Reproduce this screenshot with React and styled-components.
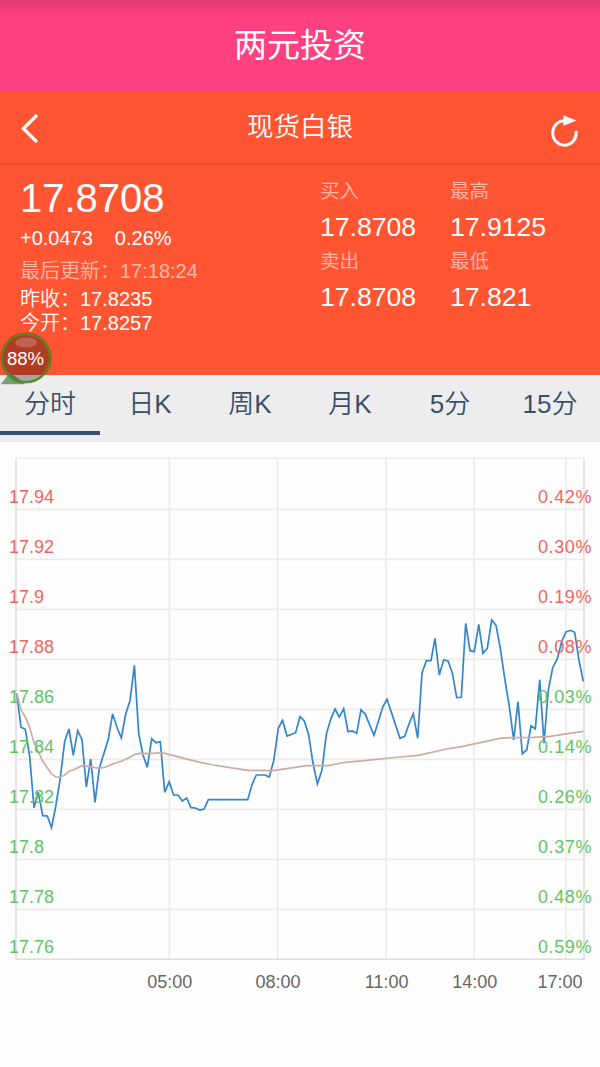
import React, { useState } from 'react';
import styled, { createGlobalStyle } from 'styled-components';

const GlobalStyle = createGlobalStyle`
    * {
        box-sizing: border-box;
    }

    body {
        margin: 0;
        background: #fefefe;
        font-family: 'Liberation Sans', 'Noto Sans CJK SC', sans-serif;
        font-weight: 350;
    }
`

const Page = styled.div`
    width: 600px;
    height: 1067px;
    overflow: hidden;
    background: #fefefe;
`

const AppBar = styled.header`
    display: flex;
    justify-content: center;
    height: 92px;
    padding-top: 1px;
    background: linear-gradient(180deg, #e13a72 0, #ff4081 17px);
    color: #fff;
    font-size: 33px;
    line-height: 90px;
    font-weight: 400;
`

const NavBar = styled.nav`
    display: flex;
    align-items: center;
    justify-content: space-between;
    height: 73px;
    padding: 0 20px;
    background: #ff5533;
    border-bottom: 2px solid #e84e2f;
`

const NavTitle = styled.h1`
    margin: 0;
    color: #fff;
    font-size: 26.5px;
    font-weight: 350;
    line-height: 70px;
    height: 71px;
`

const IconButton = styled.button`
    display: flex;
    width: 30px;
    padding: ${({ $drop }) => $drop || 0}px 0 0;
    border: none;
    background: none;
`

const Quote = styled.section`
    display: flex;
    position: relative;
    height: 210px;
    padding-left: 20px;
    background: #ff5533;
    color: #fff;
`

const Summary = styled.div`
    width: 300px;
    padding-top: 11px;
    font-size: 20px;
`

const Price = styled.div`
    font-size: 40px;
    line-height: 44px;
`

const Change = styled.div`
    display: flex;
    gap: 22px;
    padding-top: 6px;
    line-height: 24px;
`

const Updated = styled.div`
    padding-top: 9px;
    line-height: 24px;
    opacity: 0.58;
`

const Session = styled.div`
    padding-top: 5px;
    line-height: 23.5px;
`

const Stats = styled.div`
    display: grid;
    grid-template-columns: 130px 130px;
    grid-auto-rows: 70px;
    padding-top: 14px;
`

const StatLabel = styled.div`
    font-size: 19.5px;
    line-height: 24px;
    opacity: 0.58;
`

const StatValue = styled.div`
    padding-top: 8px;
    font-size: 26.6px;
    line-height: 32px;
`

const Bubble = styled.div`
    position: absolute;
    left: 0;
    top: 165px;
    width: 54px;
    height: 56px;
    z-index: 1;

    svg {
        display: block;
    }
`

const Tabs = styled.div`
    display: grid;
    grid-template-columns: repeat(6, 1fr);
    height: 67px;
    background: #ededed;
`

const Tab = styled.button`
    height: 60px;
    padding: 1px 0 0;
    border: none;
    border-bottom: 4px solid ${({ $active }) => ($active ? '#37506d' : 'transparent')};
    background: none;
    color: #37506d;
    font-family: inherit;
    font-size: 26px;
    font-weight: 350;
    line-height: 56px;
`

const ChartSvg = styled.svg`
    display: block;
    font-size: 18px;
    font-weight: 400;
`

const stats = [
    ['买入', '17.8708'],
    ['最高', '17.9125'],
    ['卖出', '17.8708'],
    ['最低', '17.821'],
]

const tabs = ['分时', '日K', '周K', '月K', '5分', '15分']

const levels = [
    ['17.94', '0.42%'],
    ['17.92', '0.30%'],
    ['17.9', '0.19%'],
    ['17.88', '0.08%'],
    ['17.86', '0.03%'],
    ['17.84', '0.14%'],
    ['17.82', '0.26%'],
    ['17.8', '0.37%'],
    ['17.78', '0.48%'],
    ['17.76', '0.59%'],
]

// [label, grid line x, label x]
const times = [
    ['05:00', 169.3, 169.7],
    ['08:00', 277.6, 278],
    ['11:00', 386, 386.7],
    ['14:00', 474.1, 474.7],
    ['17:00', 566, 560],
]

const priceLine = `16.7,251.3 21,285.3 25.3,287.3 29.7,314.7 34,365.7 38.3,350.3 42.7,373.7 47.3,374
51.5,385.7 55.7,364.7 60,338 64.7,299.3 69,287 73.3,313.3 77.7,288.7 82,297.7 86.3,345 90.7,317
95,360.3 99.3,326.3 103.7,312 108.2,297.7 112.6,272 117,285.3 121.3,296 125.7,272 130,258.7
134.4,223.3 138.7,291.3 143,313 147.3,325.3 151.7,296.7 156,300.7 160.3,299.7 164.7,350.3
169.2,339.7 173.6,353 178,353 182.3,359 186.7,356 191,365.7 195.3,366 200,368 204,367
208.3,357.7 247.7,357.7 252,342.7 256.3,333 265,333 269.3,335 273.7,318.7 278.3,286.3
282.6,278.3 287,294 295.6,290.7 300,274.7 304.3,279 308.7,293 313,321.3 317.4,342 322,328
326.3,292.3 330.7,277.3 335,267 339.3,275 343.7,266.7 348,289.7 352.3,289 356.7,291.3
361,267.7 365.3,272.3 374,293.3 378.3,279.7 382.7,265 387,257.3 400,296.3 404.7,294.3 409,282
413.3,271.7 417.7,296.3 422,231.3 426.3,218.7 431,218.7 435,196.3 439.3,233 443.7,218 448,219
452.3,230.7 456.7,255.7 461.3,255.3 465.7,181.3 470,208.7 474.3,209.7 478.7,182.3 483,211.3
487.3,206.3 491.7,178 496,183.3 500.3,206.3 504.7,236.3 509.3,264.7 513.7,298 518,259.7
522.3,311.7 526.7,308 531,284 535.3,286.7 539.7,237.7 544,301.3 548.3,248 552.7,225.7
557.3,216.7 561.7,199.7 566,190 570.3,188.3 574.7,190.3 579,218.7 583.3,239.3`

const averageLine = `16.7,251 21,268 25.3,275 29.7,285.3 34,300.7 42.7,319 51.3,331.7 55.7,335 60.7,335
64.7,333 69,329.3 73.3,328 82,323.7 90.7,324.7 96.7,326 103.3,325.7 108.3,324 113.3,321.7
121.3,319.3 130,315.3 135,312.3 140,311.3 150,311.7 161.7,310.7 200,320.3 213.3,323 230,325.7
248.3,328.3 273.3,328.7 306.7,323.7 328.3,323.7 343.3,320.7 366.7,318.3 400,315 418.3,313.3
446.7,307 461.7,304.7 500,296.3 510,295.7 533.3,295.3 550,294.3 583.3,289.3`

const BackIcon = () => (
    <svg width="20" height="32" viewBox="0 0 20 32" fill="none" stroke="#fff" strokeWidth="3.4">
        <path d="M17 3 L3.4 16.6 L17 30" />
    </svg>
)

const RefreshIcon = () => (
    <svg width="30" height="34" viewBox="0 0 30 34">
        <path d="M26.1 18 A11.7 12.2 0 1 1 14.3 6.8" fill="none" stroke="#fff" strokeWidth="3" strokeLinecap="round" />
        <path d="M13.4 1.2 L26.4 6.6 L13.4 11.8 Z" fill="#fff" />
    </svg>
)

const BatteryBubble = () => (
    <Bubble>
        <svg width="54" height="56" viewBox="0 0 54 56">
            <path d="M9 43 Q6 50 2 53.5 L24 53.5 Z" fill="#6aa569" stroke="#8a938a" strokeWidth="1.5" strokeLinejoin="round" />
            <circle cx="26" cy="28" r="25.6" fill="#000" fillOpacity="0.3" />
            <circle cx="26" cy="28" r="24" fill="none" stroke="#4f8f1c" strokeWidth="2" />
            <ellipse cx="26" cy="12.5" rx="11" ry="5" fill="#fff" fillOpacity="0.2" />
            <text x="25.5" y="34.8" fill="#fff" fontSize="18.5" fontWeight="400" textAnchor="middle">88%</text>
        </svg>
    </Bubble>
)

const Chart = () => (
    <ChartSvg width="600" height="600" viewBox="0 0 600 600">
        <g stroke="#ececec" strokeWidth="1.7">
            <path d="M16 16 H584" />
            {levels.slice(1).map(([price], i) => (
                <path key={price} d={`M16 ${67.3 + i * 50} H584`} />
            ))}
            {times.map(([label, x]) => (
                <path key={label} d={`M${x} 16 V517`} />
            ))}
        </g>
        <path d="M16 16 V517.3 H584 V16" fill="none" stroke="#e0dcdc" strokeWidth="1.6" />
        <polyline points={priceLine} fill="none" stroke="#3385cc" strokeWidth="1.7" />
        <polyline points={averageLine} fill="none" stroke="#ceac9f" strokeWidth="1.7" />
        {levels.map(([price, percent], i) => (
            <g key={price} fill={i < 4 ? '#f4645c' : '#62c462'}>
                <text x="9" y={61.3 + i * 50}>{price}</text>
                <text x="538" y={61.3 + i * 50} textLength="53.5">{percent}</text>
            </g>
        ))}
        <g fill="#666" textAnchor="middle">
            {times.map(([label, , x]) => (
                <text key={label} x={x} y="546.4">{label}</text>
            ))}
        </g>
    </ChartSvg>
)

const App = () => {
    const [active, setActive] = useState(0)

    return (
        <Page>
            <GlobalStyle />
            <AppBar>两元投资</AppBar>
            <NavBar>
                <IconButton aria-label="返回"><BackIcon /></IconButton>
                <NavTitle>现货白银</NavTitle>
                <IconButton aria-label="刷新" $drop={6}><RefreshIcon /></IconButton>
            </NavBar>
            <Quote>
                <Summary>
                    <Price>17.8708</Price>
                    <Change>
                        <span>+0.0473</span>
                        <span>0.26%</span>
                    </Change>
                    <Updated>最后更新：17:18:24</Updated>
                    <Session>
                        <div>昨收：17.8235</div>
                        <div>今开：17.8257</div>
                    </Session>
                </Summary>
                <Stats>
                    {stats.map(([label, value]) => (
                        <div key={label}>
                            <StatLabel>{label}</StatLabel>
                            <StatValue>{value}</StatValue>
                        </div>
                    ))}
                </Stats>
                <BatteryBubble />
            </Quote>
            <Tabs>
                {tabs.map((tab, i) => (
                    <Tab key={tab} $active={i === active} onClick={() => setActive(i)}>{tab}</Tab>
                ))}
            </Tabs>
            <Chart />
        </Page>
    )
}

export default App
